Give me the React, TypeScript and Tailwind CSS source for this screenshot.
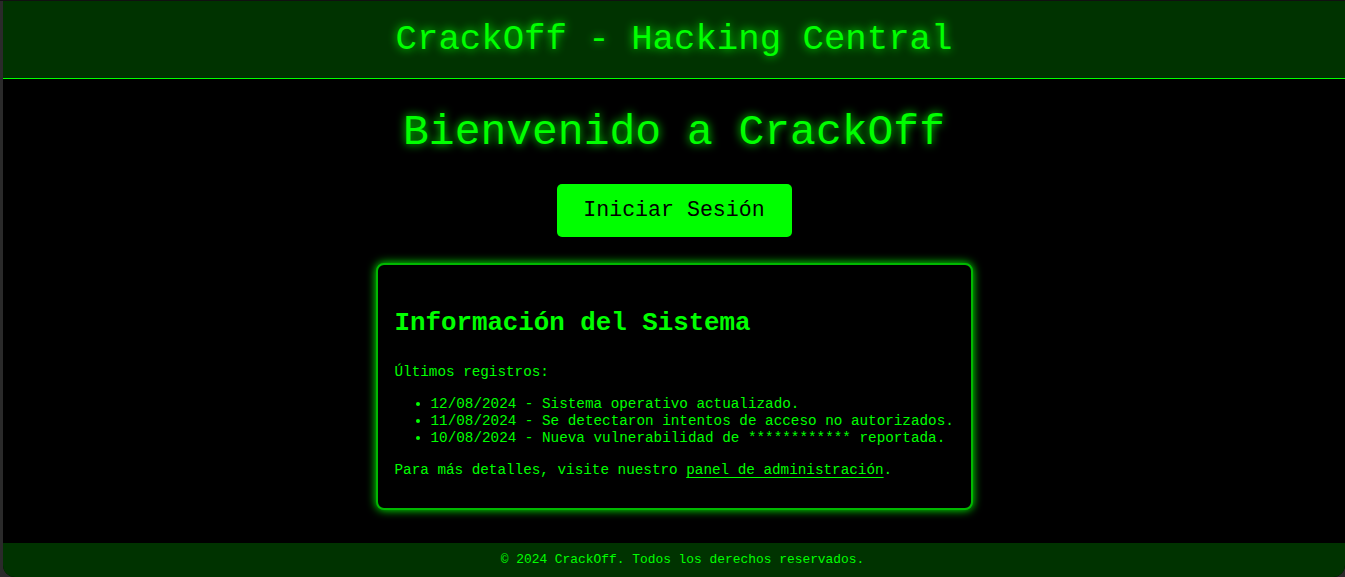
export default function App() {
  const logs = [
    '12/08/2024 - Sistema operativo actualizado.',
    '11/08/2024 - Se detectaron intentos de acceso no autorizados.',
    '10/08/2024 - Nueva vulnerabilidad de ************ reportada.',
  ];

  return (
    <div className="h-[577px] bg-[#2a2a2a] border-t border-[#111] pl-[3px] overflow-hidden font-['Liberation_Mono',monospace]">
      <div className="h-[576px] flex flex-col bg-black text-[#00ff00] rounded-b-[12px] overflow-hidden">
        {/* Header */}
        <header className="h-[78px] shrink-0 bg-[#003300] border-b border-[#00ff00] flex items-center justify-center">
          <h1 className="text-[35.7px] leading-[41px] [text-shadow:0_0_10px_#00ff00]">
            CrackOff - Hacking Central
          </h1>
        </header>

        {/* Main */}
        <main className="flex-1 flex flex-col items-center">
          <h1 className="mt-[29px] text-[43px] leading-[49px] [text-shadow:0_0_10px_#00ff00]">
            Bienvenido a CrackOff
          </h1>
          <button className="mt-[27px] h-[53px] w-[235px] bg-[#00ff00] text-black text-[21.6px] rounded-[5px]">
            Iniciar Sesión
          </button>

          <section className="mt-[26px] w-[597px] h-[247px] border-2 border-[#00b800] rounded-[8px] shadow-[0_0_10px_#00ff00] bg-black pl-[17px] pr-[4px] pt-[44px]">
            <h2 className="text-[25.8px] leading-[30px] font-bold">Información del Sistema</h2>
            <div className="text-[14.3px] leading-[17px]">
              <p className="mt-[25px]">Últimos registros:</p>
              <ul className="mt-[15px] pl-[36px] list-disc">
                {logs.map(l => (
                  <li key={l} className="whitespace-nowrap">{l}</li>
                ))}
              </ul>
              <p className="mt-[15px]">
                Para más detalles, visite nuestro{' '}
                <a href="#" className="underline underline-offset-[3px]">panel de administración</a>.
              </p>
            </div>
          </section>
        </main>

        {/* Footer */}
        <footer className="h-[34px] shrink-0 bg-[#003300] flex items-center justify-center pl-[17px] text-[12.9px]">
          © 2024 CrackOff. Todos los derechos reservados.
        </footer>
      </div>
    </div>
  );
}
